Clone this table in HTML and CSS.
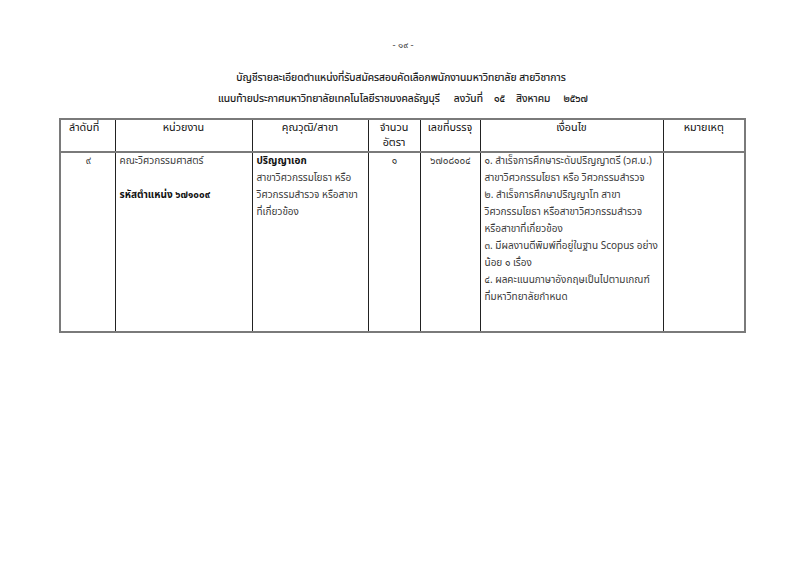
FILE: index.html
```html
<!DOCTYPE html>
<html lang="th">
<head>
<meta charset="utf-8">
<title>บัญชีรายละเอียดตำแหน่ง</title>
<link rel="stylesheet" href="styles.css">
</head>
<body>
<div class="page">
  <div class="pageno">- ๑๙ -</div>
  <div class="title">
    <div class="t1">บัญชีรายละเอียดตำแหน่งที่รับสมัครสอบคัดเลือกพนักงานมหาวิทยาลัย สายวิชาการ</div>
    <div class="t2">แนบท้ายประกาศมหาวิทยาลัยเทคโนโลยีราชมงคลธัญบุรี<span class="w1">ลงวันที่</span><span class="w2">๑๕</span><span class="w2">สิงหาคม</span><span class="w3">๒๕๖๗</span></div>
  </div>
  <table class="grid">
    <colgroup>
      <col class="c1"><col class="c2"><col class="c3"><col class="c4"><col class="c5"><col class="c6"><col class="c7">
    </colgroup>
    <thead>
      <tr>
        <th class="left">ลำดับที่</th>
        <th>หน่วยงาน</th>
        <th>คุณวุฒิ/สาขา</th>
        <th><div>จำนวน</div><div>อัตรา</div></th>
        <th>เลขที่บรรจุ</th>
        <th>เงื่อนไข</th>
        <th>หมายเหตุ</th>
      </tr>
    </thead>
    <tbody>
      <tr>
        <td class="center">๙</td>
        <td><div class="ln">คณะวิศวกรรมศาสตร์</div><div class="ln">&nbsp;</div><div class="ln"><b>รหัสตำแหน่ง ๖๗๑๐๐๙</b></div></td>
        <td><div class="ln"><b>ปริญญาเอก</b></div><div class="ln">สาขาวิศวกรรมโยธา หรือ</div><div class="ln">วิศวกรรมสำรวจ หรือสาขา</div><div class="ln">ที่เกี่ยวข้อง</div></td>
        <td class="center">๑</td>
        <td class="center">๖๗๐๘๑๐๔</td>
        <td>
          <div class="ln">๑. สำเร็จการศึกษาระดับปริญญาตรี (วศ.บ.)</div>
          <div class="ln">สาขาวิศวกรรมโยธา หรือ วิศวกรรมสำรวจ</div>
          <div class="ln">๒. สำเร็จการศึกษาปริญญาโท สาขา</div>
          <div class="ln">วิศวกรรมโยธา หรือสาขาวิศวกรรมสำรวจ</div>
          <div class="ln">หรือสาขาที่เกี่ยวข้อง</div>
          <div class="ln">๓. มีผลงานตีพิมพ์ที่อยู่ในฐาน Scopus อย่าง</div>
          <div class="ln">น้อย ๑ เรื่อง</div>
          <div class="ln">๔. ผลคะแนนภาษาอังกฤษเป็นไปตามเกณฑ์</div>
          <div class="ln">ที่มหาวิทยาลัยกำหนด</div>
        </td>
        <td></td>
      </tr>
    </tbody>
  </table>
</div>
</body>
</html>
```

FILE: styles.css
```css
html, body {
  margin: 0;
  padding: 0;
  background: #ffffff;
}
body {
  font-family: "Noto Sans Thai", "Noto Sans", "DejaVu Sans", sans-serif;
  color: #222;
  font-size: 10px;
}
.page {
  width: 800px;
  height: 566px;
  box-sizing: border-box;
  padding: 38px 57px 0 59px;
}
.pageno {
  text-align: center;
  font-size: 9.5px;
  line-height: 14px;
  color: #444;
  padding-left: 4px;
}
.title {
  margin-top: 16px;
  text-align: center;
  font-size: 10.3px;
  line-height: 21px;
  color: #111;
  -webkit-text-stroke: 0.15px #111;
}
.title .t2 {
  padding-left: 4px;
}
.title .w1 {
  margin-left: 14px;
}
.title .w2 {
  margin-left: 11px;
}
.title .w3 {
  margin-left: 13px;
}
.grid {
  margin-top: 8px;
  width: 685px;
  border-collapse: collapse;
  table-layout: fixed;
  border: 2px solid #7a7a7a;
}
col.c1 { width: 55px; }
col.c2 { width: 137px; }
col.c3 { width: 116px; }
col.c4 { width: 52px; }
col.c5 { width: 60px; }
col.c6 { width: 183px; }
col.c7 { width: 82px; }
.grid th {
  font-weight: normal;
  font-size: 10.8px;
  line-height: 14.5px;
  height: 30px;
  padding: 1px 3px 0;
  text-align: center;
  vertical-align: top;
  border: 1px solid #222;
  border-bottom: 2px solid #7a7a7a;
  color: #111;
}
.grid th.left {
  text-align: left;
  padding-left: 8px;
}
.grid td {
  font-size: 10px;
  line-height: 17px;
  height: 178px;
  padding: 0 3px 0 4px;
  vertical-align: top;
  border: 1px solid #222;
  color: #3a3a3a;
}
.grid td .ln {
  white-space: nowrap;
}
.grid td b {
  color: #111;
}
.grid td.center {
  text-align: center;
}
```
